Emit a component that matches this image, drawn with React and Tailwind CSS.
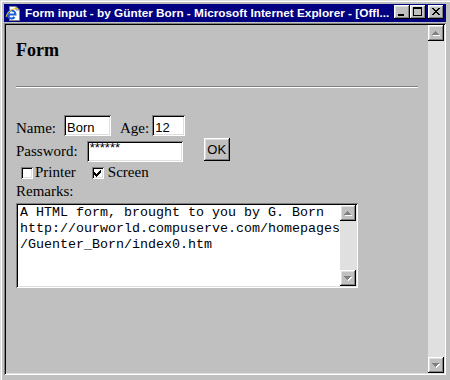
const raised = 'shadow-[inset_-1px_-1px_#000,inset_1px_1px_#fff,inset_-2px_-2px_#808080,inset_2px_2px_#dfdfdf]'
const sunken = 'shadow-[inset_1px_1px_#808080,inset_-1px_-1px_#fff,inset_2px_2px_#000,inset_-2px_-2px_#dfdfdf]'

// pixel helper for little bitmap glyphs
function Px({ rects, fill }) {
  return rects.map(([x, y, w, h], i) => <rect key={i} x={x} y={y} width={w} height={h} fill={fill} />)
}

function IeIcon() {
  return (
    <svg width="16" height="16" viewBox="0 0 16 16">
      <polygon points="4.5,1.5 11,1.5 14.5,5 14.5,15.5 4.5,15.5" fill="#fff" stroke="#808080" />
      <polyline points="11,1.5 11,5 14.5,5" fill="none" stroke="#808080" />
      <path d="M3 9.5 H10.5 A4 4 0 1 0 9.6 12" fill="none" stroke="#1f5fd6" strokeWidth="2" />
      <path d="M1 12 C3 5 11 2 13 4" fill="none" stroke="#f2c21b" strokeWidth="1" />
    </svg>
  )
}

function CaptionBtn({ kind, className = '' }) {
  const glyph = {
    min: [[4, 9, 6, 2]],
    max: [[3, 2, 9, 2], [3, 2, 1, 9], [11, 2, 1, 9], [3, 10, 9, 1]],
    close: [
      [4, 3, 2, 1], [10, 3, 2, 1], [5, 4, 2, 1], [9, 4, 2, 1], [6, 5, 4, 1], [7, 6, 2, 1],
      [6, 7, 4, 1], [5, 8, 2, 1], [9, 8, 2, 1], [4, 9, 2, 1], [10, 9, 2, 1],
    ],
  }[kind]
  return (
    <div className={`w-[16px] h-[14px] bg-[#c0c0c0] ${raised} ${className}`}>
      <svg width="16" height="14" shapeRendering="crispEdges">
        <Px rects={glyph} fill="#000" />
      </svg>
    </div>
  )
}

function ScrollBtn({ dir }) {
  const up = [[7, 6, 1, 1], [6, 7, 3, 1], [5, 8, 5, 1], [4, 9, 7, 1]]
  const down = [[4, 6, 7, 1], [5, 7, 5, 1], [6, 8, 3, 1], [7, 9, 1, 1]]
  const r = dir === 'up' ? up : down
  return (
    <div className={`w-[16px] h-[16px] shrink-0 bg-[#c0c0c0] ${raised}`}>
      <svg width="16" height="16" shapeRendering="crispEdges">
        <Px rects={r.map(([x, y, w, h]) => [x + 1, y + 1, w, h])} fill="#fff" />
        <Px rects={r} fill="#808080" />
      </svg>
    </div>
  )
}

function ScrollBar() {
  return (
    <div className="w-[16px] flex flex-col shrink-0">
      <ScrollBtn dir="up" />
      <div className="flex-1 bg-[#e0e0e0]" />
      <ScrollBtn dir="down" />
    </div>
  )
}

function Field({ children, className = '' }) {
  return (
    <div className={`h-[21px] bg-white ${sunken} font-['Liberation_Sans',Arial,sans-serif] text-[13px] leading-[15px] pt-[5px] pl-[3px] ${className}`}>
      {children}
    </div>
  )
}

function CheckBox({ checked, className = '' }) {
  const tick = [
    [6, 0, 1, 1], [5, 1, 2, 1], [0, 2, 1, 1], [4, 2, 3, 1], [0, 3, 2, 1], [3, 3, 3, 1],
    [0, 4, 5, 1], [1, 5, 3, 1], [2, 6, 1, 1],
  ]
  return (
    <div className={`w-[12px] h-[12px] shrink-0 bg-white ${sunken} ${className}`}>
      {checked && (
        <svg width="12" height="12" shapeRendering="crispEdges">
          <Px rects={tick.map(([x, y, w, h]) => [x + 2, y + 3, w, h])} fill="#000" />
        </svg>
      )}
    </div>
  )
}

export default function App() {
  return (
    <div className="w-[450px] h-[380px] overflow-hidden bg-[#c0c0c0] flex flex-col pt-[4px] pb-[5px] px-[4px] shadow-[inset_1px_1px_#dfdfdf,inset_2px_2px_#fff] text-black">
      {/* title bar */}
      <div className="h-[18px] shrink-0 bg-[#000080] flex items-center pl-[1px] pr-[2px]">
        <IeIcon />
        <span className="ml-[4px] flex-1 whitespace-nowrap text-white font-bold font-['Liberation_Sans',Arial,sans-serif] text-[11.8px] leading-[18px]">
          Form input - by Günter Born - Microsoft Internet Explorer - [Offl...
        </span>
        <CaptionBtn kind="min" className="-mt-[2px]" />
        <CaptionBtn kind="max" className="-mt-[2px]" />
        <CaptionBtn kind="close" className="ml-[2px] -mt-[2px]" />
      </div>

      {/* client area */}
      <div className={`mt-[1px] flex-1 flex p-[2px] ${sunken}`}>
        <div className="flex-1 overflow-hidden px-[10px] font-['Liberation_Serif','Times_New_Roman',serif] text-[15px] leading-[17px]">
          <h3 className="mt-[15px] text-[18px] leading-[20px] font-bold">Form</h3>
          <div className="mt-[26px] h-[2px] border-t border-b border-t-[#808080] border-b-white" />

          <div className="mt-[27px] h-[21px] flex items-start">
            <span className="mt-[5px]">Name:</span>
            <Field className="ml-[8px] w-[47px]">Born</Field>
            <span className="mt-[5px] ml-[9px]">Age:</span>
            <Field className="ml-[3px] w-[33px]">12</Field>
          </div>

          <div className="mt-[2px] h-[24px] flex items-start">
            <span className="mt-[5px]">Password:</span>
            <div className={`ml-[9px] mt-[3px] w-[96px] h-[21px] bg-white ${sunken} pl-[3px] font-['Liberation_Sans',Arial,sans-serif] text-[13px] leading-[13px]`}>
              ******
            </div>
            <button className={`ml-[21px] w-[26px] h-[23px] bg-[#c0c0c0] ${raised} font-['Liberation_Sans',Arial,sans-serif] text-[13px] leading-[15px]`}>
              OK
            </button>
          </div>

          <div className="mt-[2px] h-[17px] flex items-start">
            <CheckBox className="ml-[5px] mt-[3px]" />
            <span className="ml-[2px]">Printer</span>
            <CheckBox checked className="ml-[16px] mt-[3px]" />
            <span className="ml-[4px]">Screen</span>
          </div>

          <div className="mt-[2px]">Remarks:</div>

          <div className={`mt-[3px] w-[342px] h-[85px] flex p-[2px] bg-white ${sunken}`}>
            <div className="flex-1 pl-[2px] whitespace-pre font-['Liberation_Mono','Courier_New',monospace] text-[13.33px] leading-[16px]">
              {'A HTML form, brought to you by G. Born\nhttp://ourworld.compuserve.com/homepages\n/Guenter_Born/index0.htm'}
            </div>
            <ScrollBar />
          </div>
        </div>
        <ScrollBar />
      </div>
    </div>
  )
}
